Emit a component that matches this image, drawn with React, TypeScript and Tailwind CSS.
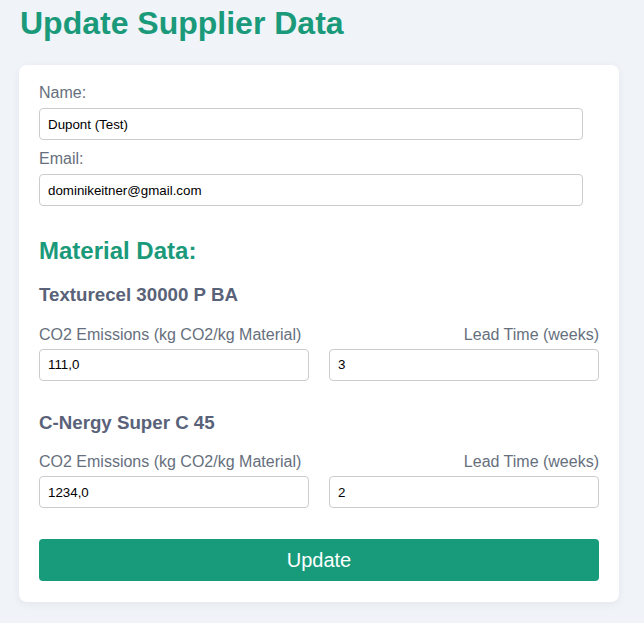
import { useState } from "react";

type Material = { name: string; co2: string; lead: string };

const initial: Material[] = [
  { name: "Texturecel 30000 P BA", co2: "111,0", lead: "3" },
  { name: "C-Nergy Super C 45", co2: "1234,0", lead: "2" },
];

const inputCls =
  "block h-[32px] rounded-[4px] border border-[#cccccc] bg-white px-2 text-[13.33px] text-black outline-none";

export default function App() {
  const [name, setName] = useState("Dupont (Test)");
  const [email, setEmail] = useState("dominikeitner@gmail.com");
  const [materials, setMaterials] = useState(initial);

  function setField(i: number, key: "co2" | "lead", value: string) {
    setMaterials((m) => m.map((x, j) => (j === i ? { ...x, [key]: value } : x)));
  }

  return (
    <div className="min-h-screen bg-[#f0f4f8] px-[19px] pt-[5px] pb-5 font-['Liberation_Sans',Arial,sans-serif]">
      <h1 className="pl-px text-[32px] font-bold leading-[37px] text-[#1a9a7a]">Update Supplier Data</h1>

      <div className="mt-[23px] w-[600px] rounded-lg bg-white px-5 pt-[19px] pb-[21px] shadow-[0_2px_8px_rgba(0,0,0,0.06)]">
        <label className="block text-base leading-[18px] text-[#666f7d]">Name:</label>
        <input
          className={`${inputCls} mt-[6px] w-[544px]`}
          value={name}
          onChange={(e) => setName(e.target.value)}
        />
        <label className="mt-[10px] block text-base leading-[18px] text-[#666f7d]">Email:</label>
        <input
          className={`${inputCls} mt-[6px] w-[544px]`}
          value={email}
          onChange={(e) => setEmail(e.target.value)}
        />

        <h2 className="mt-[31px] text-[24px] font-bold leading-[28px] text-[#1a9a7a]">Material Data:</h2>

        {materials.map((m, i) => (
          <div key={m.name} className={i === 0 ? "mt-[19px]" : "mt-[31px]"}>
            <h3 className="text-[18.72px] font-bold leading-[21.5px] text-[#596278]">{m.name}</h3>
            <div className="mt-5 grid grid-cols-2 gap-x-5">
              <label className="text-base leading-[18px] text-[#666f7d]">CO2 Emissions (kg CO2/kg Material)</label>
              <label className="text-right text-base leading-[18px] text-[#666f7d]">Lead Time (weeks)</label>
              <input
                className={`${inputCls} mt-[5px] w-full`}
                value={m.co2}
                onChange={(e) => setField(i, "co2", e.target.value)}
              />
              <input
                className={`${inputCls} mt-[5px] w-full`}
                value={m.lead}
                onChange={(e) => setField(i, "lead", e.target.value)}
              />
            </div>
          </div>
        ))}

        <button className="mt-[31px] block h-[42px] w-full rounded-[4px] bg-[#189b7b] text-xl text-white">
          Update
        </button>
      </div>
    </div>
  );
}
